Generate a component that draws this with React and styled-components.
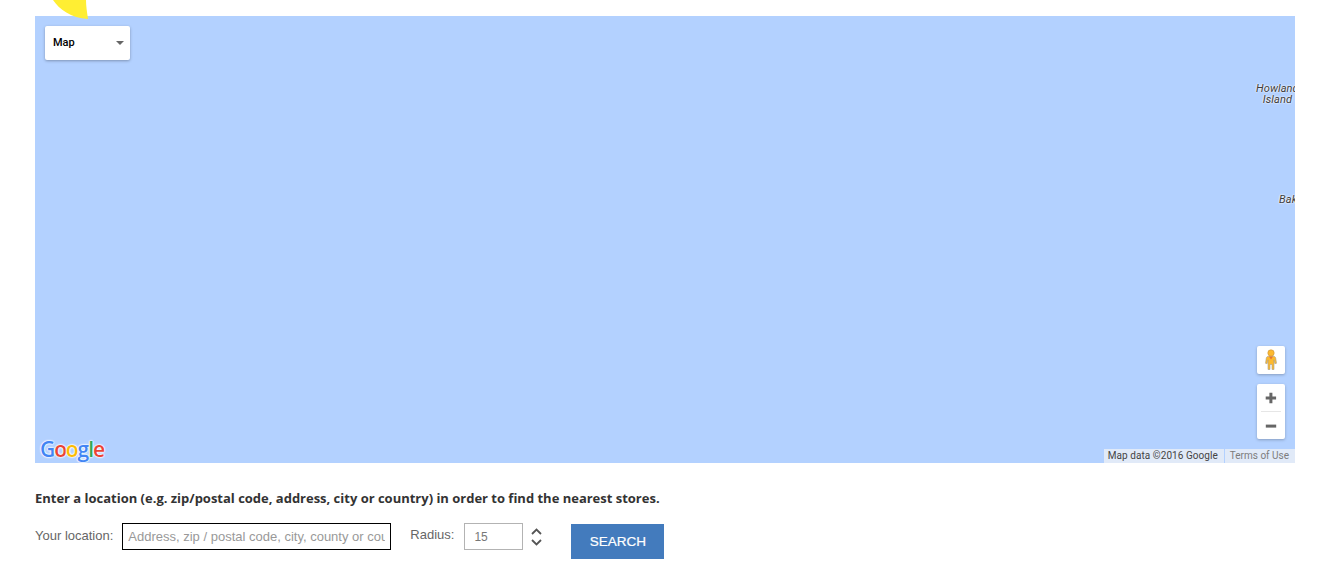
import React from 'react';
import styled, { createGlobalStyle } from 'styled-components';

const GlobalStyle = createGlobalStyle`
  html, body {
    margin: 0;
    padding: 0;
    background: #fff;
  }
`;

const Page = styled.div`
  position: relative;
  width: 1327px;
  height: 573px;
  padding: 16px 32px 0 35px;
  box-sizing: border-box;
  overflow: hidden;
`;

const YellowBlob = styled.svg`
  position: absolute;
  z-index: 2;
  left: 50px;
  top: 0;
`;

const MapCanvas = styled.div`
  position: relative;
  height: 447px;
  width: 1260px;
  background: #b3d1ff;
  overflow: hidden;
`;

const MapTypeSelect = styled.div`
  position: absolute;
  left: 10px;
  top: 10px;
  width: 85px;
  height: 34px;
  padding: 0 8px 2px;
  box-sizing: border-box;
  display: flex;
  align-items: center;
  justify-content: space-between;
  background: #fff;
  border-radius: 2px;
  box-shadow: 0 1px 3px rgba(0, 0, 0, 0.3);
  font: 500 11px Roboto, sans-serif;
  color: #000;
`;

const Caret = styled.span`
  width: 0;
  height: 0;
  margin-right: -2px;
  margin-top: 1px;
  border-left: 4px solid transparent;
  border-right: 4px solid transparent;
  border-top: 4px solid #666;
`;

const PlaceLabel = styled.div`
  position: absolute;
  left: ${p => p.$left}px;
  top: ${p => p.$top}px;
  font: italic 11px/11px Roboto, sans-serif;
  letter-spacing: 0.1px;
  color: #3c3c3c;
  text-align: center;
  white-space: nowrap;
  text-shadow: 0 0 2px #fff, 0 0 2px #fff;
`;

const ControlButton = styled.div`
  position: absolute;
  left: 1222px;
  top: 330px;
  width: 28px;
  height: 28px;
  display: flex;
  align-items: center;
  justify-content: center;
  background: #fff;
  border-radius: 2px;
  box-shadow: 0 1px 3px rgba(0, 0, 0, 0.25);
`;

const ZoomControl = styled.div`
  position: absolute;
  left: 1222px;
  top: 368px;
  width: 28px;
  height: 55px;
  display: flex;
  flex-direction: column;
  align-items: center;
  background: #fff;
  border-radius: 2px;
  box-shadow: 0 1px 3px rgba(0, 0, 0, 0.25);
`;

const ZoomStep = styled.div`
  height: 27px;
  display: flex;
  align-items: center;
  justify-content: center;
`;

const ZoomDivider = styled.div`
  width: 20px;
  height: 1px;
  background: #e6e6e6;
`;

const GoogleLogo = styled.div`
  position: absolute;
  left: 5px;
  bottom: 2px;
  font: 600 21px/24px "Open Sans", sans-serif;
  letter-spacing: -1.1px;
  text-shadow: 0 0 2px #fff, 0 0 2px #fff, 0 0 2px #fff, 0 0 1px #fff;
`;

const LogoLetter = styled.span`
  color: ${p => p.$color};
`;

const Attribution = styled.div`
  position: absolute;
  right: 0;
  bottom: 0;
  height: 14px;
  display: flex;
  gap: 1px;
  font: 10px/14px Roboto, sans-serif;
`;

const AttributionItem = styled.span`
  padding: ${p => p.$muted ? '0 6px 0 5px' : '0 6px 0 4px'};
  background: rgba(245, 245, 245, 0.7);
  color: ${p => p.$muted ? '#7c7c7c' : '#444'};
  letter-spacing: ${p => p.$muted ? '0' : '0.05px'};
`;

const Intro = styled.p`
  margin: 27px 0 0;
  font: 700 13px/17px "Open Sans", sans-serif;
  letter-spacing: -0.01px;
  color: #333;
`;

const SearchForm = styled.div`
  display: flex;
  align-items: flex-start;
  margin-top: 16px;
  font: 13px/16px "Liberation Sans", Arial, sans-serif;
  color: #666;
`;

const FieldLabel = styled.label`
  margin-top: ${p => p.$top}px;
  margin-right: ${p => p.$gap}px;
`;

const LocationInput = styled.input`
  width: 269px;
  height: 27px;
  padding: 0 5px;
  box-sizing: border-box;
  border: 1px solid #000;
  border-radius: 0;
  outline: none;
  margin-right: 19px;
  font: 13px "Liberation Sans", Arial, sans-serif;
  color: #666;

  &::placeholder {
    color: #999;
    opacity: 1;
  }
`;

const RadiusInput = styled.input`
  width: 59px;
  height: 27px;
  padding: 0 9px;
  box-sizing: border-box;
  border: 1px solid #b3b3b3;
  border-radius: 0;
  outline: none;
  font: 12px "Liberation Sans", Arial, sans-serif;
  color: #777;
`;

const Spinner = styled.svg`
  display: block;
  margin: 4px 0 0 7px;
`;

const SearchButton = styled.button`
  width: 93px;
  height: 35px;
  margin: 1px 0 0 28px;
  border: 0;
  padding: 0;
  background: #437bbd;
  color: #fff;
  font: 13.5px "Liberation Sans", Arial, sans-serif;
  -webkit-text-stroke: 0.2px #fff;
`;

const PegmanIcon = () => (
  <svg width="14" height="22" viewBox="0 0 14 22">
    <circle cx="7" cy="4" r="3.2" fill="#fdb92e" stroke="#c9923a" strokeWidth="0.6" />
    <path
      d="M4 7.5h6c1 0 1.5.7 1.7 1.6l.8 5.2-1.6.4-.9-3.8v9.6H8v-5H6v5H4v-9.6l-.9 3.8-1.6-.4.8-5.2C2.5 8.2 3 7.5 4 7.5z"
      fill="#fdb92e"
      stroke="#a8a08c"
      strokeWidth="0.6"
    />
    <path d="M5 7.5h4L7 10.5z" fill="#e8742c" />
  </svg>
);

const PlusIcon = () => (
  <svg width="12" height="12" viewBox="0 0 12 12">
    <path d="M4.4.8h3v3.7h3.7v3H7.4v3.7h-3V7.5H.7v-3h3.7z" fill="#666" />
  </svg>
);

const MinusIcon = () => (
  <svg width="12" height="12" viewBox="0 0 12 12">
    <path d="M.8 4.6h10.4v3H.8z" fill="#666" />
  </svg>
);

const logoLetters = [
  ['G', '#4285f4'],
  ['o', '#ea4335'],
  ['o', '#fbbc05'],
  ['g', '#4285f4'],
  ['l', '#34a853'],
  ['e', '#ea4335'],
];

export default function App() {
  return (
    <>
      <GlobalStyle />
      <Page>
        <YellowBlob width="42" height="20" viewBox="0 0 42 20">
          <path d="M3 0C9 9 21 18 38 19 37 12 36 6 36 0z" fill="#ffee33" />
        </YellowBlob>
        <MapCanvas>
          <MapTypeSelect>
            Map
            <Caret />
          </MapTypeSelect>
          <PlaceLabel $left={1221} $top={67}>Howland<br />Island</PlaceLabel>
          <PlaceLabel $left={1244} $top={178}>Baker</PlaceLabel>
          <ControlButton><PegmanIcon /></ControlButton>
          <ZoomControl>
            <ZoomStep><PlusIcon /></ZoomStep>
            <ZoomDivider />
            <ZoomStep><MinusIcon /></ZoomStep>
          </ZoomControl>
          <GoogleLogo>
            {logoLetters.map(([letter, color], i) => (
              <LogoLetter key={i} $color={color}>{letter}</LogoLetter>
            ))}
          </GoogleLogo>
          <Attribution>
            <AttributionItem>Map data ©2016 Google</AttributionItem>
            <AttributionItem $muted>Terms of Use</AttributionItem>
          </Attribution>
        </MapCanvas>
        <Intro>Enter a location (e.g. zip/postal code, address, city or country) in order to find the nearest stores.</Intro>
        <SearchForm>
          <FieldLabel $top={5} $gap={9}>Your location:</FieldLabel>
          <LocationInput placeholder="Address, zip / postal code, city, county or country" />
          <FieldLabel $top={4} $gap={10}>Radius:</FieldLabel>
          <RadiusInput defaultValue="15" />
          <Spinner width="13" height="20" viewBox="0 0 13 20">
            <path d="M2 7l4.5-4.5L11 7M2 13l4.5 4.5L11 13" fill="none" stroke="#555" strokeWidth="1.8" />
          </Spinner>
          <SearchButton>SEARCH</SearchButton>
        </SearchForm>
      </Page>
    </>
  );
}
